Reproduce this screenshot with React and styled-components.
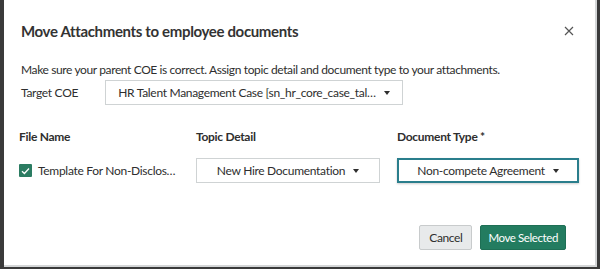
import React from "react";
import styled, { createGlobalStyle } from "styled-components";

const Global = createGlobalStyle`
  html, body { margin: 0; padding: 0; background: #3a3a3a; }
  body { font-family: Lato, "Open Sans", sans-serif; color: #2e2e2e; }
  * { box-sizing: border-box; }
`;

const Backdrop = styled.div`
  width: 600px;
  height: 269px;
  padding: 0 3px 2px 4px;
  background: #3a3a3a;
  display: flex;
`;

const Modal = styled.div`
  flex: 1;
  background: #fff;
  border-right: 2px solid #d4d6d7;
  border-bottom: 2px solid #d4d6d7;
  display: flex;
  flex-direction: column;
`;

const Header = styled.div`
  display: flex;
  align-items: center;
  justify-content: space-between;
  padding: 18px 21px 0 17px;
  height: 44px;
`;

const Title = styled.h2`
  margin: 0;
  font-size: 15px;
  font-weight: 700;
  color: #333;
  letter-spacing: -0.35px;
`;

const Close = styled.button`
  border: 0;
  background: none;
  padding: 0;
  width: 10px;
  height: 10px;
  display: flex;
`;

const Body = styled.div`
  padding: 18px 0 0 17px;
  display: flex;
  flex-direction: column;
  font-size: 12px;
  letter-spacing: -0.3px;
`;

const Intro = styled.p`
  margin: 0;
  line-height: 16px;
  letter-spacing: -0.38px;
`;

const CoeRow = styled.div`
  display: flex;
  align-items: center;
  margin-top: 2px;
`;

const Label = styled.span`
  width: 84px;
`;

const Select = styled.div`
  width: ${p => p.$w}px;
  height: 25px;
  border: ${p => (p.$focus ? "2px solid #2a7e8c" : "1px solid #cfd3d4")};
  background: #fff;
  display: flex;
  align-items: center;
  justify-content: center;
  gap: 6px;
  padding: 0 10px;
  white-space: nowrap;
  box-shadow: ${p => (p.$focus ? "0 1px 2px rgba(0,0,0,0.2)" : "none")};
`;

const Caret = styled.span`
  width: 0;
  height: 0;
  border-left: 3.5px solid transparent;
  border-right: 3.5px solid transparent;
  border-top: 4px solid #2e2e2e;
  margin-left: 2px;
`;

const Grid = styled.div`
  display: grid;
  grid-template-columns: 175px 201px 182px;
  row-gap: 14px;
  margin-top: 24px;
  align-items: center;
`;

const ColHead = styled.span`
  font-weight: 700;
  margin-left: ${p => p.$shift || 0}px;
`;

const FileCell = styled.label`
  display: flex;
  align-items: center;
  gap: 6px;
  margin-left: -2px;
  white-space: nowrap;
`;

const Check = styled.span`
  width: 13px;
  height: 13px;
  background: #2b7c62;
  border-radius: 1px;
  display: flex;
  align-items: center;
  justify-content: center;
`;

const Footer = styled.div`
  margin-top: auto;
  display: flex;
  justify-content: flex-end;
  gap: 8px;
  padding: 0 29px 15px 0;
`;

const Button = styled.button`
  height: 25px;
  padding: 0 ${p => (p.$primary ? 7 : 9)}px;
  font-family: inherit;
  font-size: ${p => (p.$primary ? 11.5 : 12)}px;
  letter-spacing: -0.4px;
  border-radius: 2px;
  border: 1px solid ${p => (p.$primary ? "#1e6f55" : "#c8cbcc")};
  background: ${p => (p.$primary ? "#237c60" : "#e8eaeb")};
  color: ${p => (p.$primary ? "#fff" : "#2e2e2e")};
`;

export default function App() {
  return (
    <>
      <Global />
      <Backdrop>
        <Modal>
          <Header>
            <Title>Move Attachments to employee documents</Title>
            <Close aria-label="Close">
              <svg width="10" height="10" viewBox="0 0 10 10">
                <path d="M1 1L9 9M9 1L1 9" stroke="#555" strokeWidth="1.2" />
              </svg>
            </Close>
          </Header>
          <Body>
            <Intro>
              Make sure your parent COE is correct. Assign topic detail and document type to your attachments.
            </Intro>
            <CoeRow>
              <Label>Target COE</Label>
              <Select $w={298}>
                HR Talent Management Case [sn_hr_core_case_tal…
                <Caret />
              </Select>
            </CoeRow>
            <Grid>
              <ColHead $shift={-2}>File Name</ColHead>
              <ColHead>Topic Detail</ColHead>
              <ColHead>Document Type *</ColHead>
              <FileCell>
                <Check>
                  <svg width="9" height="8" viewBox="0 0 9 8">
                    <path d="M1 4.2L3.4 6.5L8 1.5" stroke="#fff" strokeWidth="1.3" fill="none" />
                  </svg>
                </Check>
                Template For Non-Disclos…
              </FileCell>
              <Select $w={184}>
                New Hire Documentation
                <Caret />
              </Select>
              <Select $w={182} $focus>
                Non-compete Agreement
                <Caret />
              </Select>
            </Grid>
          </Body>
          <Footer>
            <Button>Cancel</Button>
            <Button $primary>Move Selected</Button>
          </Footer>
        </Modal>
      </Backdrop>
    </>
  );
}
